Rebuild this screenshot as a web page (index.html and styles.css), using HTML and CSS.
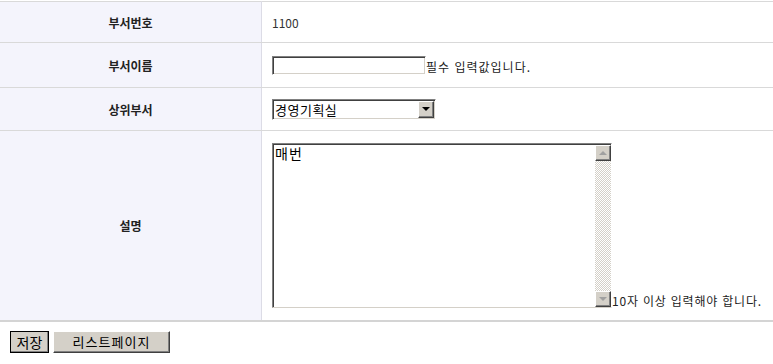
FILE: index.html
```html
<!DOCTYPE html>
<html lang="ko">
<head>
    <meta charset="UTF-8">
    <title>부서 수정</title>
    <link rel="stylesheet" href="styles.css">
</head>
<body>
    <form class="dept-form">
        <table class="form-table">
            <tr class="row-no">
                <th>부서번호</th>
                <td>1100</td>
            </tr>
            <tr class="row-name">
                <th>부서이름</th>
                <td>
                    <div class="field">
                        <input type="text" class="win-input">
                        <span class="hint">필수 입력값입니다.</span>
                    </div>
                </td>
            </tr>
            <tr class="row-parent">
                <th>상위부서</th>
                <td>
                    <div class="win-select">
                        <select>
                            <option>경영기획실</option>
                        </select>
                        <span class="select-btn"><i class="tri-down"></i></span>
                    </div>
                </td>
            </tr>
            <tr class="row-desc">
                <th>설명</th>
                <td>
                    <div class="field">
                        <div class="win-textarea">
                            <textarea>매번 </textarea>
                            <div class="scrollbar">
                                <span class="sb-btn"><i class="tri-up"></i></span>
                                <span class="sb-track"></span>
                                <span class="sb-btn"><i class="tri-down"></i></span>
                            </div>
                        </div>
                        <span class="hint hint-low">10자 이상 입력해야 합니다.</span>
                    </div>
                </td>
            </tr>
        </table>
        <div class="actions">
            <button type="submit" class="win-btn btn-default">저장</button>
            <button type="button" class="win-btn btn-list">리스트페이지</button>
        </div>
    </form>
</body>
</html>
```

FILE: styles.css
```css
/* base */
body {
    margin: 0;
    font-family: "Noto Sans CJK KR", "Noto Sans", sans-serif;
    font-size: 12px;
    color: #333;
    background: #fff;
}

/* form table */
.form-table {
    width: 100%;
    border-collapse: collapse;
    border-top: 1px solid #d9d9d9;
    margin-top: 1px;
}

.form-table th,
.form-table td {
    border-bottom: 1px solid #d9d9d9;
    padding: 0 10px;
    vertical-align: middle;
}

.form-table th {
    width: 241px;
    background: #f4f4fc;
    border-right: 1px solid #dcdce6;
    font-weight: bold;
    color: #222;
    text-align: center;
}

.form-table td {
    text-align: left;
    padding-left: 10px;
}

.row-no th, .row-no td { height: 40px; }
.row-name th, .row-name td { height: 44px; }
.row-parent th, .row-parent td { height: 42px; }
.row-desc th, .row-desc td {
    height: 189px;
    border-bottom: 2px solid #d4d4d4;
}

.field {
    display: flex;
    align-items: flex-end;
}

.hint {
    line-height: 16px;
    letter-spacing: 1px;
    color: #222;
}

.hint-low {
    margin-bottom: -1px;
    letter-spacing: 0.8px;
}

/* classic windows controls */
.win-input {
    width: 148px;
    height: 17px;
    margin: 0;
    padding: 0 2px;
    border: 1px solid;
    border-color: #808080 #fff #fff #808080;
    box-shadow: inset 1px 1px 0 #404040, inset -1px -1px 0 #d4d0c8;
    font: inherit;
}

.win-select {
    display: flex;
    width: 160px;
    height: 17px;
    border: 1px solid;
    border-color: #808080 #fff #fff #808080;
    box-shadow: inset 1px 1px 0 #404040, inset -1px -1px 0 #d4d0c8;
    padding: 1px;
    background: #fff;
}

.win-select select {
    appearance: none;
    -webkit-appearance: none;
    flex: 1;
    border: none;
    outline: none;
    background: transparent;
    padding: 0 1px;
    font-family: "Noto Sans CJK KR", sans-serif;
    font-size: 13px;
    line-height: 17px;
    letter-spacing: 0.5px;
    color: #000;
}

.select-btn,
.sb-btn {
    width: 14px;
    height: 14px;
    flex: none;
    background: #d4d0c8;
    border: 1px solid;
    border-color: #fff #404040 #404040 #fff;
    box-shadow: inset -1px -1px 0 #808080;
    display: flex;
    align-items: center;
    justify-content: center;
}

.select-btn {
    height: 15px;
}

.tri-down,
.tri-up {
    width: 0;
    height: 0;
    border-left: 4px solid transparent;
    border-right: 4px solid transparent;
}

.tri-down { border-top: 4px solid #000; }
.tri-up { border-bottom: 4px solid #a0a0a0; }
.scrollbar .tri-down { border-top-color: #a0a0a0; }

.win-textarea {
    display: flex;
    width: 337px;
    height: 162px;
    border: 1px solid;
    border-color: #808080 #fff #d4d0c8 #808080;
    box-shadow: inset 1px 1px 0 #404040;
    padding: 1px 0 0 1px;
    background: #fff;
}

.win-textarea textarea {
    flex: 1;
    border: none;
    outline: none;
    resize: none;
    overflow: hidden;
    margin: 0;
    padding: 0 1px;
    font-family: "Noto Sans CJK KR", sans-serif;
    font-size: 14px;
    line-height: 17px;
    letter-spacing: 1px;
    color: #000;
}

.scrollbar {
    width: 16px;
    display: flex;
    flex-direction: column;
}

.sb-track {
    flex: 1;
    background-color: #fff;
    background-image: repeating-conic-gradient(#d4d0c8 0 25%, #fff 0 50%);
    background-size: 2px 2px;
}

/* buttons */
.actions {
    padding: 9px 10px;
    display: flex;
    gap: 4px;
}

.win-btn {
    height: 22px;
    margin: 0;
    padding: 0 4px;
    background: #d4d0c8;
    border: 1px solid;
    border-color: #fff #404040 #404040 #fff;
    box-shadow: inset -1px -1px 0 #808080;
    font-family: "Noto Sans CJK KR", sans-serif;
    font-size: 13px;
    line-height: 18px;
    color: #000;
}

.btn-default {
    width: 39px;
    outline: 1px solid #000;
    outline-offset: -1px;
    font-size: 14px;
}

.btn-list {
    width: 117px;
    letter-spacing: 1px;
}
```
